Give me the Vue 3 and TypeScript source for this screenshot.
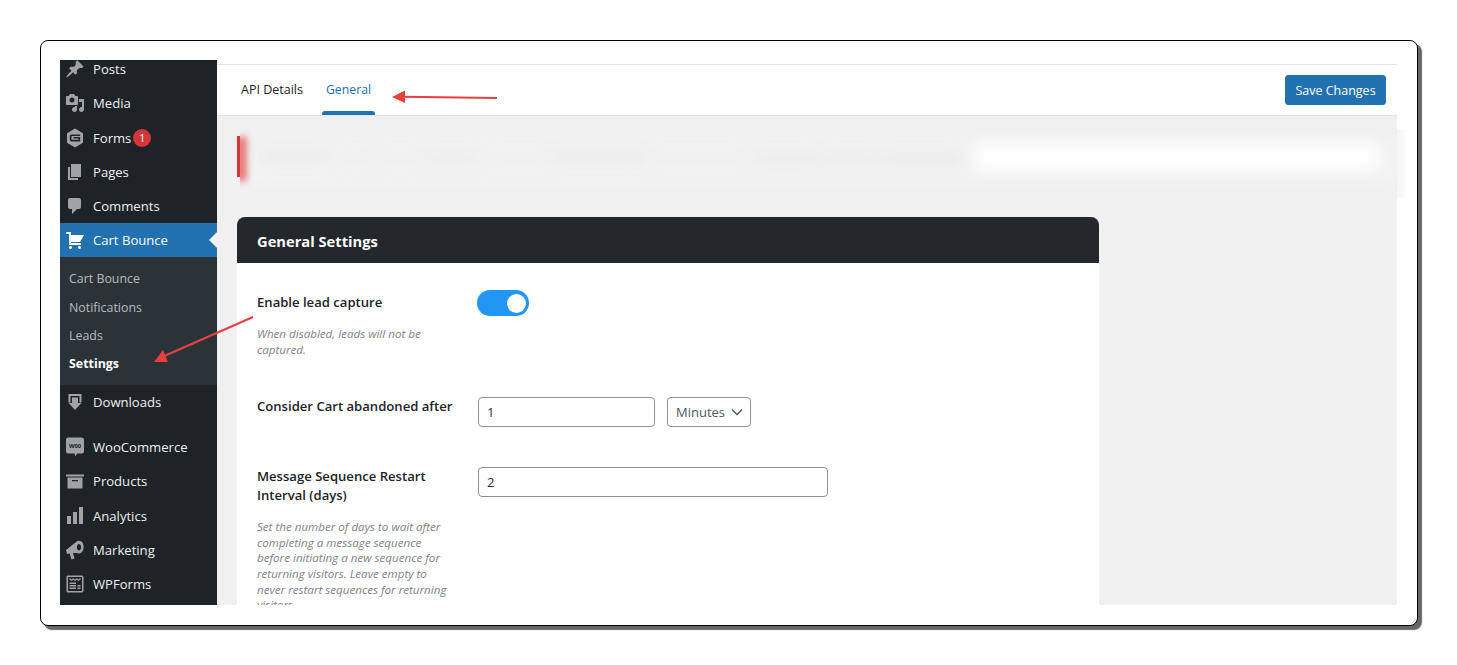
<script setup lang="ts">
interface MenuItem {
  label: string
  d: string
  badge?: string
  active?: boolean
  gap?: boolean
  mark?: string
}

const topItems: MenuItem[] = [
  { label: 'Posts', d: 'M10.44 3.02l1.82-1.82 6.36 6.35-1.83 1.82c-1.05-.68-2.48-.57-3.41.36l-.75.75c-.92.93-1.04 2.35-.35 3.41l-1.83 1.82-2.41-2.41-2.8 2.79c-.42.42-3.38 2.71-3.8 2.29s1.86-3.39 2.28-3.81l2.79-2.79L4.1 9.36l1.83-1.82c1.05.69 2.48.57 3.4-.36l.75-.75c.93-.92 1.05-2.35.36-3.41z' },
  { label: 'Media', d: 'M13 11V4c0-.55-.45-1-1-1h-1.67L9 1H5L3.67 3H2c-.55 0-1 .45-1 1v7c0 .55.45 1 1 1h10c.55 0 1-.45 1-1zM7 4.5c1.38 0 2.5 1.12 2.5 2.5S8.38 9.5 7 9.5 4.5 8.38 4.5 7 5.62 4.5 7 4.5zM14 6h5v10.5c0 1.38-1.12 2.5-2.5 2.5S14 17.88 14 16.5s1.12-2.5 2.5-2.5c.17 0 .34.02.5.05V9h-3V6zm-4 8.05V13h2v3.5c0 1.38-1.12 2.5-2.5 2.5S7 17.88 7 16.5 8.12 14 9.5 14c.17 0 .34.02.5.05z' },
  { label: 'Forms', badge: '1', d: 'M10 .6l8 4.6v9.600L10 19.400l-8-4.600V5.200zM6.600 6.600c-1 0-1.800.8-1.800 1.800v3.200c0 1 .8 1.800 1.800 1.800h8.600V9H8.500v1.500h5v1.300H6.900c-.2 0-.4-.2-.4-.4V8.500c0-.2.2-.4.4-.4h8.300V6.600z' },
  { label: 'Pages', d: 'M6 15V2h10v13H6zm-1 1h8v2H3V5h2v11z' },
  { label: 'Comments', d: 'M5 2h9c1.100 0 2 .9 2 2v7c0 1.100-.9 2-2 2h-2l-5 5v-5H5c-1.100 0-2-.9-2-2V4c0-1.100.9-2 2-2z' },
  { label: 'Cart Bounce', active: true, d: 'M6 13h9c.55 0 1 .45 1 1s-.45 1-1 1H5c-.55 0-1-.45-1-1V4H2c-.55 0-1-.45-1-1s.45-1 1-1h3c.55 0 1 .45 1 1v2h13l-4 7H6v1zm-.5 3c.83 0 1.500.67 1.500 1.500S6.330 19 5.500 19 4 18.330 4 17.500 4.670 16 5.500 16zm9 0c.83 0 1.500.67 1.500 1.500s-.67 1.500-1.500 1.500-1.500-.67-1.500-1.500.67-1.500 1.500-1.500z' }
]

const subItems = [
  { label: 'Cart Bounce', current: false },
  { label: 'Notifications', current: false },
  { label: 'Leads', current: false },
  { label: 'Settings', current: true }
]

const bottomItems: MenuItem[] = [
  { label: 'Downloads', d: 'M3.500 2h13v8.500h-2V4h-9v6.500h-2zM7 5.500h6V11h3.500L10 18l-6.500-7H7z' },
  { label: 'WooCommerce', gap: true, mark: 'W00', d: 'M3 .5h13.500c1.300 0 2.500 1 2.500 2.500v11.500c0 1.100-.9 2-2 2h-5L10.500 19.500 9.500 16.500H3c-1.100 0-2-.9-2-2V3C1 1.500 1.800.5 3 .5z' },
  { label: 'Products', d: 'M1 3.500h18v2H1zM2.500 6.500h15v11h-15zM7 9v1.300h6V9z' },
  { label: 'Analytics', d: 'M2 10h4v8H2zM8 6h4v12H8zM14 1h4v17h-4z' },
  { label: 'Marketing', d: 'M1 10L12 1.200C14 .2 17 .8 18 3.500C19.200 6.500 18.800 10.500 16.500 12.600C15 13.800 13.200 13.500 12 13L8 13L9.500 18.600L6.500 19.400L4.600 13.600L2 14ZM14 4C12.800 4 11.900 5.500 11.900 7.200C11.900 9 12.800 10.400 14 10.400C15.200 10.400 16.100 9 16.100 7.200C16.100 5.500 15.200 4 14 4Z' },
  { label: 'WPForms', d: 'M3 1.500h14c.8 0 1.500.7 1.500 1.500v14c0 .8-.7 1.500-1.500 1.500H3c-.8 0-1.500-.7-1.500-1.500V3c0-.8.7-1.500 1.500-1.500zM3 3v14h14V3zM4.500 3.800l2 1.700 1.700-1.300L10 5.500l1.800-1.300 1.700 1.300 2-1.700v1.600l-2 1.700-1.700-1.300L10 7.100 8.200 5.800 6.500 7.100l-2-1.700zM4.500 8.500h6.500V10H4.500zM4.500 11h6.500v1.500H4.500zM12.500 11h3v1.500h-3zM4.500 13.500h6.500V15H4.500zM12.500 13.500h3V15h-3z' }
]

const blobs = [
  { left: 18, width: 70, top: 22, tone: '#e9eaea' },
  { left: 95, width: 40, top: 24, tone: '#eeeeee' },
  { left: 135, width: 50, top: 24, tone: '#eeeeee' },
  { left: 185, width: 55, top: 24, tone: '#ebecec' },
  { left: 245, width: 70, top: 24, tone: '#efefef' },
  { left: 310, width: 95, top: 23, tone: '#eaebeb' },
  { left: 405, width: 105, top: 24, tone: '#eeeeee' },
  { left: 510, width: 70, top: 24, tone: '#ebebeb' },
  { left: 580, width: 60, top: 24, tone: '#ececec' },
  { left: 640, width: 85, top: 24, tone: '#eaeaea' }
]
</script>

<template>
  <div class="page">
    <div class="frame">
      <div class="shot">
        <aside class="sidebar">
          <ul class="menu">
            <li v-for="item in topItems" :key="item.label" class="item" :class="{ active: item.active }">
              <svg class="icon" viewBox="0 0 20 20"><path :d="item.d" fill-rule="evenodd" /></svg>
              <span>{{ item.label }}</span>
              <span v-if="item.badge" class="badge">{{ item.badge }}</span>
            </li>
          </ul>
          <ul class="submenu">
            <li v-for="sub in subItems" :key="sub.label" :class="{ current: sub.current }">{{ sub.label }}</li>
          </ul>
          <ul class="menu">
            <li v-for="item in bottomItems" :key="item.label" class="item" :class="{ gapped: item.gap }">
              <svg class="icon" viewBox="0 0 20 20">
                <path :d="item.d" fill-rule="evenodd" />
                <text v-if="item.mark" x="10" y="11" text-anchor="middle" class="woo-mark">{{ item.mark }}</text>
              </svg>
              <span>{{ item.label }}</span>
            </li>
          </ul>
        </aside>

        <main class="main">
          <div class="topline"></div>
          <header class="tabbar">
            <nav class="tabs">
              <a class="tab">API Details</a>
              <a class="tab selected">General</a>
            </nav>
            <button class="save" type="button">Save Changes</button>
          </header>

          <div class="content">
            <div class="notice"></div>

            <section class="card">
              <h2 class="card-title">General Settings</h2>
              <div class="card-body">
                <div class="row">
                  <div class="label-col">
                    <label class="label first">Enable lead capture</label>
                    <p class="desc">When disabled, leads will not be captured.</p>
                  </div>
                  <span class="toggle"><span class="knob"></span></span>
                </div>

                <div class="row">
                  <div class="label-col">
                    <label class="label">Consider Cart abandoned after</label>
                  </div>
                  <div class="field short">1</div>
                  <div class="select">
                    <span>Minutes</span>
                    <svg width="12" height="8" viewBox="0 0 12 8"><path d="M1 1.500l5 5 5-5" fill="none" stroke="#50575e" stroke-width="1.500" /></svg>
                  </div>
                </div>

                <div class="row">
                  <div class="label-col">
                    <label class="label">Message Sequence Restart Interval (days)</label>
                    <p class="desc">Set the number of days to wait after completing a message sequence before initiating a new sequence for returning visitors. Leave empty to never restart sequences for returning visitors.</p>
                  </div>
                  <div class="field long">2</div>
                </div>
              </div>
            </section>
          </div>
        </main>
      </div>

      <div class="blur-strip">
        <div class="band"></div>
        <div class="smear"></div>
        <div class="glow"></div>
        <div
          v-for="(b, i) in blobs"
          :key="i"
          class="blob"
          :style="{ left: b.left + 'px', width: b.width + 'px', top: b.top + 'px', background: b.tone }"
        ></div>
        <div class="strip-end"></div>
      </div>

      <svg class="arrows" width="1378" height="586" viewBox="0 0 1378 586">
        <path d="M457 58 L362 56.800" stroke="#e5403f" stroke-width="2" fill="none" />
        <path d="M352 57 L365 50.500 L365 63 Z" fill="#e5403f" />
        <path d="M213 277 L122 317" stroke="#e5403f" stroke-width="2" fill="none" />
        <path d="M114 322 L123 310 L128 322 Z" fill="#e5403f" />
      </svg>
    </div>
  </div>
</template>

<style scoped>
* { box-sizing: border-box; }
.page {
  height: 665px;
  padding: 40px 0 0 40px;
  overflow: hidden;
  background: #fff;
}
.frame {
  position: relative;
  width: 1378px;
  height: 586px;
  padding: 19px 20px 20px 19px;
  background: #fff;
  border: 1px solid #000;
  border-radius: 8px;
  box-shadow: 4px 4px 1px #666;
  font-family: "Open Sans", "Noto Sans", sans-serif;
  font-size: 13px;
}
.shot {
  display: flex;
  height: 545px;
  overflow: hidden;
}
.sidebar {
  width: 157px;
  flex: none;
  background: #1d2327;
  color: #f0f0f1;
  font-size: 13.100px;
  overflow: hidden;
}
.menu, .submenu { list-style: none; margin: 0; padding: 0; }
.menu:first-child { margin-top: -7.800px; }
.item {
  position: relative;
  display: flex;
  align-items: center;
  height: 34.200px;
  padding-left: 5px;
  white-space: nowrap;
}
.item.gapped { margin-top: 10.600px; }
.icon {
  width: 20px;
  height: 20px;
  margin-right: 8px;
  fill: #9ea3a8;
  flex: none;
}
.woo-mark {
  fill: #1d2327;
  font-size: 5.800px;
  font-weight: 700;
  font-family: "Open Sans", sans-serif;
}
.item.active { background: #2271b1; color: #fff; }
.item.active .icon { fill: #fff; }
.item.active::after {
  content: "";
  position: absolute;
  right: 0;
  top: 9px;
  border: 8px solid transparent;
  border-right-color: #f0f0f1;
  border-left-width: 0;
}
.badge {
  width: 18px;
  height: 18px;
  margin-left: 2px;
  border-radius: 50%;
  background: #d63638;
  color: #fff;
  font-size: 10.500px;
  line-height: 18px;
  text-align: center;
}
.submenu {
  height: 128px;
  padding: 7.800px 0 0 9px;
  background: #2c3338;
  color: rgba(240, 246, 252, .7);
  font-size: 12.400px;
}
.submenu li { height: 28.400px; line-height: 28.400px; }
.submenu li.current { color: #fff; font-weight: 700; }

.main {
  flex: 1;
  min-width: 0;
  display: flex;
  flex-direction: column;
  background: #f0f0f1;
}
.topline { height: 5px; background: #fff; border-bottom: 1px solid #e2e4e7; flex: none; }
.tabbar {
  flex: none;
  height: 51px;
  display: flex;
  justify-content: space-between;
  align-items: flex-start;
  padding: 10px 11px 0 0;
  background: #fff;
  border-bottom: 1px solid #e2e4e7;
}
.tabs { display: flex; padding-left: 19px; margin-top: -10px; }
.tab {
  position: relative;
  display: block;
  height: 50px;
  padding: 0 5px;
  margin-right: 14px;
  line-height: 50px;
  color: #1d2327;
  font-size: 12.500px;
}
.tab.selected { color: #2271b1; padding: 0 4px; width: 53px; font-size: 12.300px; }
.tab.selected::after {
  content: "";
  position: absolute;
  left: 0;
  right: 0;
  bottom: 0;
  height: 4px;
  background: #2271b1;
  border-radius: 3px 3px 0 0;
}
.save {
  width: 101px;
  height: 30px;
  padding: 0;
  border: 1px solid #2271b1;
  border-radius: 3px;
  background: #2271b1;
  color: #fff;
  font: inherit;
  font-size: 12.500px;
}
.content {
  flex: 1;
  padding: 20px 20px 0;
  min-height: 0;
}
.notice {
  height: 41px;
  border-left: 3px solid #d63638;
}
.card {
  width: 862px;
  margin-top: 40px;
  background: #fff;
  border-radius: 8px 8px 0 0;
  overflow: hidden;
  padding-bottom: 40px;
}
.card-title {
  margin: 0;
  height: 46px;
  padding-left: 20px;
  background: #23282d;
  color: #fff;
  font-size: 14.700px;
  font-weight: 700;
  line-height: 49px;
}
.card-body {
  display: flex;
  flex-direction: column;
  gap: 40px;
  padding: 27px 20px 0;
}
.row { display: flex; align-items: flex-start; color: #1d2327; }
.label-col { width: 221px; flex: none; }
.label { display: block; width: 200px; font-size: 13.100px; font-weight: 600; line-height: 19px; }
.label.first { padding-top: 3px; height: 22px; }
.desc {
  width: 200px;
  margin: 14px 0 0;
  color: #7e8389;
  font-size: 11.600px;
  font-style: italic;
  line-height: 15.600px;
}
.toggle {
  display: flex;
  justify-content: flex-end;
  align-items: center;
  width: 52px;
  height: 26px;
  margin-left: -1px;
  padding-right: 3px;
  border-radius: 13px;
  background: #2196f3;
}
.knob { width: 19px; height: 19px; border-radius: 50%; background: #fff; }
.field, .select {
  height: 30px;
  border: 1px solid #8c8f94;
  border-radius: 4px;
  background: #fff;
  line-height: 28px;
  color: #2c3338;
}
.field { padding-left: 8px; }
.field.short { width: 177px; }
.field.long { width: 350px; }
.select {
  display: flex;
  align-items: center;
  justify-content: space-between;
  width: 84px;
  margin-left: 12px;
  padding: 0 7px 0 8px;
  color: #50575e;
}

.blur-strip {
  position: absolute;
  left: 199px;
  top: 88px;
  width: 1165px;
  height: 68px;
  background: #f0f0f0;
  overflow: hidden;
}
.band {
  position: absolute;
  left: 0;
  right: 0;
  top: 8px;
  height: 44px;
  background: #f3f3f3;
  filter: blur(8px);
}
.smear {
  position: absolute;
  left: -4px;
  top: 8px;
  width: 11px;
  height: 44px;
  background: #e8797b;
  filter: blur(3px);
}
.glow {
  position: absolute;
  left: 734px;
  top: 15px;
  width: 404px;
  height: 26px;
  background: #fff;
  filter: blur(8px);
}
.blob {
  position: absolute;
  height: 12px;
  filter: blur(7px);
}
.strip-end {
  position: absolute;
  right: 0;
  top: 0;
  bottom: 0;
  width: 8px;
  background: linear-gradient(90deg, #f6f6f6, #fbfbfb);
}
.arrows {
  position: absolute;
  left: -1px;
  top: -1px;
  pointer-events: none;
}
</style>

<style>
html, body { background: #fff; }
</style>
